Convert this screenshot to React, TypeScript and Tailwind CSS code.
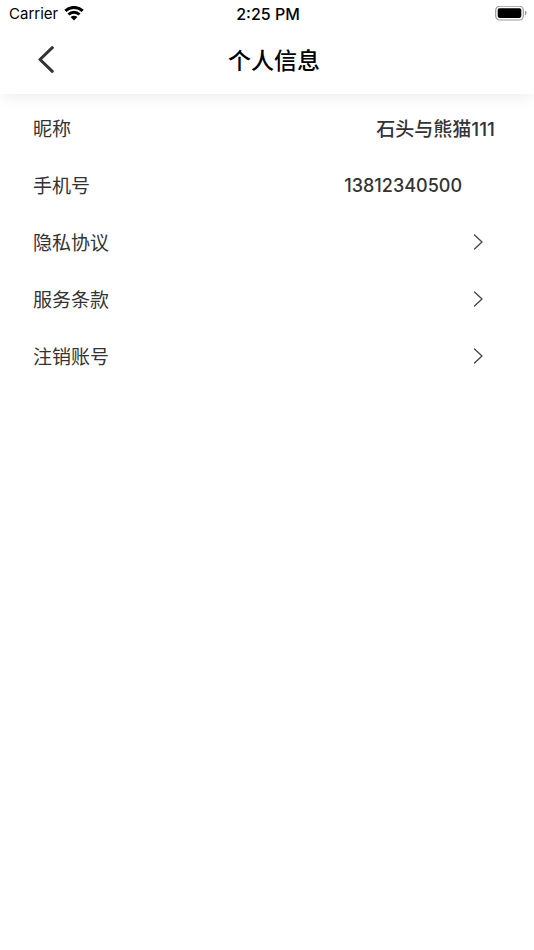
const rows = [
  { label: '昵称', value: '石头与熊猫111', valueClass: 'mr-[39px] pt-[6px] text-[19px]' },
  { label: '手机号', value: '13812340500', valueClass: 'mr-[72px] pt-[2px] text-lg' },
];

const links = ['隐私协议', '服务条款', '注销账号'];

function StatusBar() {
  return (
    <div className="grid grid-cols-3 items-center h-7 pl-[9px] pr-[7px] font-['Inter','Liberation_Sans',sans-serif] text-black">
      <div className="flex items-center gap-[6px] text-[15px]">
        <span>Carrier</span>
        <svg width="20" height="16" viewBox="0 0 20 16" fill="none" stroke="black" strokeWidth="3" aria-hidden="true">
          <path d="M1.3 4.9a12.6 12.6 0 0 1 17.4 0" />
          <path d="M4.5 8.5a8 8 0 0 1 11 0" />
          <path d="M10 14.4 6.6 11.1a4.8 4.8 0 0 1 6.8 0Z" fill="black" stroke="none" />
        </svg>
      </div>
      <span className="text-center text-base font-medium">2:25 PM</span>
      <svg className="justify-self-end" width="32" height="16" viewBox="0 0 32 16" aria-hidden="true">
        <rect x="0.7" y="0.2" width="27.6" height="13.8" rx="4" fill="none" stroke="#999" strokeWidth="1.2" />
        <rect x="2.7" y="2.3" width="23.6" height="9.6" rx="1.8" fill="black" />
        <path d="M30 4.6v5a2.8 2.8 0 0 0 0-5Z" fill="#999" />
      </svg>
    </div>
  );
}

export default function App() {
  return (
    <div className="min-h-screen bg-white font-['Inter','Noto_Sans_CJK_SC',sans-serif] text-[#333]">
      <header className="bg-white shadow-[0_6px_14px_-3px_rgba(0,0,0,0.08)]">
        <StatusBar />
        <div className="grid grid-cols-[1fr_auto_1fr] items-center h-[66px] pl-[38px] pr-6 pb-[3px]">
          <button type="button" aria-label="返回" className="justify-self-start">
            <svg width="16" height="27" viewBox="0 0 16 27" fill="none" stroke="#333" strokeWidth="3" strokeLinecap="round" strokeLinejoin="round">
              <path d="M14.3 1.7 2 13.5l12.3 11.8" />
            </svg>
          </button>
          <h1 className="pt-1 text-[23px] font-medium text-black">个人信息</h1>
        </div>
      </header>

      <main className="pt-[5px] text-[19px]">
        {rows.map((row) => (
          <div key={row.label} className="flex items-center justify-between h-[57px] pl-[33px]">
            <span className="pt-[6px]">{row.label}</span>
            <span className={`font-medium ${row.valueClass}`}>{row.value}</span>
          </div>
        ))}
        {links.map((label) => (
          <a key={label} href="#" className="flex items-center justify-between h-[57px] pl-[33px] pr-[51px]">
            <span className="pt-[6px]">{label}</span>
            <svg width="10" height="16" viewBox="0 0 10 16" fill="none" stroke="#444" strokeWidth="1.3" strokeLinecap="round" strokeLinejoin="round" aria-hidden="true">
              <path d="M1.5 1 9 8l-7.5 7" />
            </svg>
          </a>
        ))}
      </main>
    </div>
  );
}
